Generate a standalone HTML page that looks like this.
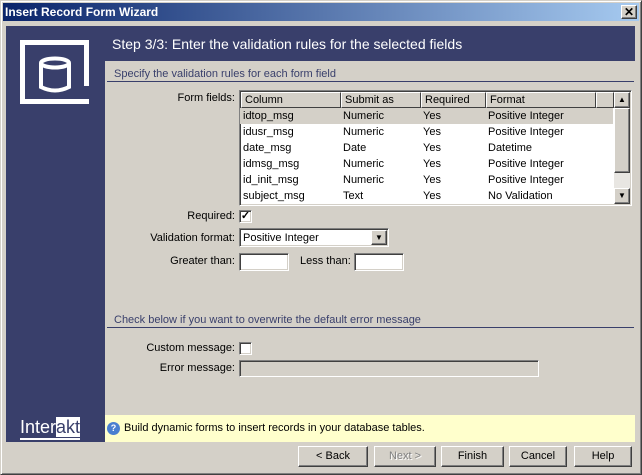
<html><head><style>
*{box-sizing:border-box}
body{margin:0;width:642px;height:475px;background:#d4d0c8;font-family:"Liberation Sans",Arial,sans-serif;font-size:11px;position:relative;overflow:hidden;color:#000}
.a{position:absolute}
.t{position:absolute;white-space:nowrap}
.r{position:absolute;white-space:nowrap;right:407px;text-align:right}
.sunk{background:#fff;border:1px solid;border-color:#808080 #fff #fff #808080;box-shadow:inset 1px 1px 0 #404040,inset -1px -1px 0 #d4d0c8}
.btn{position:absolute;height:21px;background:#d4d0c8;border:1px solid;border-color:#fff #404040 #404040 #fff;box-shadow:inset -1px -1px 0 #808080;text-align:center;line-height:19px}
.row{position:absolute;left:0;width:373px;height:16px;line-height:16px}
.row span{position:absolute}
</style></head><body>
<div class="a" style="left:0;top:0;width:642px;height:475px;border:1px solid;border-color:#d4d0c8 #404040 #404040 #d4d0c8;box-shadow:inset 1px 1px 0 #fff,inset -1px -1px 0 #808080"></div>
<div class="a" style="left:3px;top:3px;width:636px;height:18px;background:linear-gradient(90deg,#0a246a,#a6caf0)"></div>
<div class="t" style="left:5px;top:4px;color:#fff;font-weight:bold;font-size:12px;line-height:16px">Insert Record Form Wizard</div>
<div class="btn" style="left:621px;top:5px;width:16px;height:14px;line-height:12px;font-weight:bold;font-size:12px">✕</div>
<div class="a" style="left:6px;top:26px;width:629px;height:416px;background:#393f6b"></div>
<div class="a" style="left:105px;top:61px;width:530px;height:354px;background:#d4d0c8"></div>
<div class="a" style="left:105px;top:415px;width:530px;height:27px;background:#ffffcc"></div>
<div class="a" style="left:20px;top:40px;width:69px;height:64px;border:5px solid #fff"></div>
<div class="a" style="left:84px;top:86px;width:5px;height:13px;background:#393f6b"></div>
<svg class="a" style="left:36px;top:56px" width="40" height="42"><ellipse cx="19" cy="7" rx="14" ry="4.5" fill="none" stroke="#fff" stroke-width="4"/><path d="M5 7V31Q19 38 33 31V7" fill="none" stroke="#fff" stroke-width="4"/></svg>
<div class="t" style="left:20px;top:417px;color:#fff;font-size:18px;line-height:21px;border-bottom:2px solid #fff">Inter<span style="background:#fff;color:#393f6b">akt</span></div>
<div class="t" style="left:112px;top:36px;color:#fff;font-size:14px">Step 3/3: Enter the validation rules for the selected fields</div>
<div class="t" style="left:114px;top:68px;color:#393f6b">Specify the validation rules for each form field</div>
<div class="a" style="left:107px;top:81px;width:527px;height:1px;background:#393f6b"></div>
<div class="r" style="top:92px">Form fields:</div>
<div class="a sunk" style="left:239px;top:90px;width:393px;height:116px;overflow:hidden">
 <div class="a" style="left:1px;top:1px;width:373px;height:16px;background:#d4d0c8;line-height:15px">
  <div class="a" style="left:0;width:100px;height:16px;border:1px solid;border-color:#fff #404040 #404040 #fff;padding-left:3px">Column</div>
  <div class="a" style="left:100px;width:80px;height:16px;border:1px solid;border-color:#fff #404040 #404040 #fff;padding-left:3px">Submit as</div>
  <div class="a" style="left:180px;width:65px;height:16px;border:1px solid;border-color:#fff #404040 #404040 #fff;padding-left:3px">Required</div>
  <div class="a" style="left:245px;width:110px;height:16px;border:1px solid;border-color:#fff #404040 #404040 #fff;padding-left:3px">Format</div>
  <div class="a" style="left:355px;width:18px;height:16px;border:1px solid;border-color:#fff #404040 #404040 #fff"></div>
 </div>
 <div class="row" style="top:17px;background:#d4d0c8"><span style="left:3px">idtop_msg</span><span style="left:103px">Numeric</span><span style="left:183px">Yes</span><span style="left:248px">Positive Integer</span></div>
 <div class="row" style="top:33px"><span style="left:3px">idusr_msg</span><span style="left:103px">Numeric</span><span style="left:183px">Yes</span><span style="left:248px">Positive Integer</span></div>
 <div class="row" style="top:49px"><span style="left:3px">date_msg</span><span style="left:103px">Date</span><span style="left:183px">Yes</span><span style="left:248px">Datetime</span></div>
 <div class="row" style="top:65px"><span style="left:3px">idmsg_msg</span><span style="left:103px">Numeric</span><span style="left:183px">Yes</span><span style="left:248px">Positive Integer</span></div>
 <div class="row" style="top:81px"><span style="left:3px">id_init_msg</span><span style="left:103px">Numeric</span><span style="left:183px">Yes</span><span style="left:248px">Positive Integer</span></div>
 <div class="row" style="top:97px"><span style="left:3px">subject_msg</span><span style="left:103px">Text</span><span style="left:183px">Yes</span><span style="left:248px">No Validation</span></div>
 <div class="a" style="left:374px;top:1px;width:16px;height:112px;background:#e8e6e2"></div>
 <div class="btn" style="left:374px;top:1px;width:16px;height:16px;line-height:14px;font-size:8px">▲</div>
 <div class="btn" style="left:374px;top:17px;width:16px;height:65px"></div>
 <div class="btn" style="left:374px;top:97px;width:16px;height:16px;line-height:14px;font-size:8px">▼</div>
</div>
<div class="r" style="top:210px">Required:</div>
<div class="a sunk" style="left:239px;top:210px;width:13px;height:13px;font-size:11px;line-height:10px;text-align:center;font-weight:bold">✓</div>
<div class="r" style="top:232px">Validation format:</div>
<div class="a sunk" style="left:239px;top:228px;width:150px;height:19px;padding:2px 3px;line-height:14px">Positive Integer</div>
<div class="btn" style="left:371px;top:230px;width:16px;height:15px;line-height:13px;font-size:8px">▼</div>
<div class="r" style="top:255px">Greater than:</div>
<div class="a sunk" style="left:239px;top:253px;width:50px;height:18px"></div>
<div class="t" style="left:300px;top:255px">Less than:</div>
<div class="a sunk" style="left:354px;top:253px;width:50px;height:18px"></div>
<div class="t" style="left:114px;top:314px;color:#393f6b">Check below if you want to overwrite the default error message</div>
<div class="a" style="left:107px;top:327px;width:527px;height:1px;background:#393f6b"></div>
<div class="r" style="top:342px">Custom message:</div>
<div class="a sunk" style="left:239px;top:342px;width:13px;height:13px"></div>
<div class="r" style="top:362px">Error message:</div>
<div class="a sunk" style="left:239px;top:360px;width:300px;height:17px;background:#d4d0c8"></div>
<div class="a" style="left:107px;top:422px;width:13px;height:13px;border-radius:50%;background:#4a7fd0;color:#fff;font-size:9px;line-height:13px;text-align:center;font-weight:bold">?</div>
<div class="t" style="left:124px;top:422px">Build dynamic forms to insert records in your database tables.</div>
<div class="btn" style="left:298px;top:446px;width:70px">&lt; Back</div>
<div class="btn" style="left:374px;top:446px;width:62px;color:#808080;text-shadow:1px 1px 0 #fff">Next &gt;</div>
<div class="btn" style="left:441px;top:446px;width:63px">Finish</div>
<div class="btn" style="left:509px;top:446px;width:58px">Cancel</div>
<div class="btn" style="left:574px;top:446px;width:58px">Help</div>
</body></html>
